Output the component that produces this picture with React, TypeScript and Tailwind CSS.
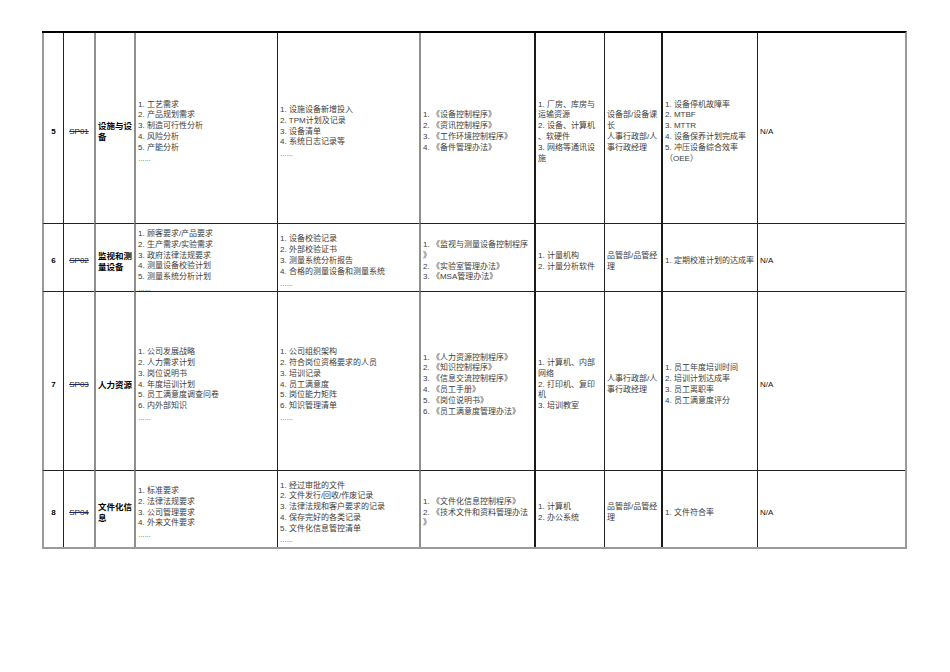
import React from "react";

type Row = {
  no: string;
  code: string;
  name: string[];
  inputs: string[];
  records: string[];
  docs: string[];
  resources: string[];
  owner: string[];
  kpis: string[];
  other: string;
};

const rows: Row[] = [
  {
    no: "5",
    code: "SP01",
    name: ["设施与设", "备"],
    inputs: ["1. 工艺需求", "2. 产品规划需求", "3. 制造可行性分析", "4. 风险分析", "5. 产能分析", "……"],
    records: ["1. 设施设备新增投入", "2. TPM计划及记录", "3. 设备清单", "4. 系统日志记录等", "……"],
    docs: ["1. 《设备控制程序》", "2. 《资讯控制程序》", "3. 《工作环境控制程序》", "4. 《备件管理办法》"],
    resources: ["1. 厂房、库房与", "运输资源", "2. 设备、计算机", "、软硬件", "3. 网络等通讯设", "施"],
    owner: ["设备部/设备课", "长", "人事行政部/人", "事行政经理"],
    kpis: ["1. 设备停机故障率", "2. MTBF", "3. MTTR", "4. 设备保养计划完成率", "5. 冲压设备综合效率", "（OEE）"],
    other: "N/A",
  },
  {
    no: "6",
    code: "SP02",
    name: ["监视和测", "量设备"],
    inputs: ["1. 顾客要求/产品要求", "2. 生产需求/实验需求", "3. 政府法律法规要求", "4. 测量设备校验计划", "5. 测量系统分析计划", "……"],
    records: ["1. 设备校验记录", "2. 外部校验证书", "3. 测量系统分析报告", "4. 合格的测量设备和测量系统", "……"],
    docs: ["1. 《监视与测量设备控制程序", "》", "2. 《实验室管理办法》", "3. 《MSA管理办法》"],
    resources: ["1. 计量机构", "2. 计量分析软件"],
    owner: ["品管部/品管经", "理"],
    kpis: ["1. 定期校准计划的达成率"],
    other: "N/A",
  },
  {
    no: "7",
    code: "SP03",
    name: ["人力资源"],
    inputs: ["1. 公司发展战略", "2. 人力需求计划", "3. 岗位说明书", "4. 年度培训计划", "5. 员工满意度调查问卷", "6. 内外部知识", "……"],
    records: ["1. 公司组织架构", "2. 符合岗位资格要求的人员", "3. 培训记录", "4. 员工满意度", "5. 岗位能力矩阵", "6. 知识管理清单", "……"],
    docs: ["1. 《人力资源控制程序》", "2. 《知识控制程序》", "3. 《信息交流控制程序》", "4. 《员工手册》", "5. 《岗位说明书》", "6. 《员工满意度管理办法》"],
    resources: ["1. 计算机、内部", "网络", "2. 打印机、复印", "机", "3. 培训教室"],
    owner: ["人事行政部/人", "事行政经理"],
    kpis: ["1. 员工年度培训时间", "2. 培训计划达成率", "3. 员工离职率", "4. 员工满意度评分"],
    other: "N/A",
  },
  {
    no: "8",
    code: "SP04",
    name: ["文件化信", "息"],
    inputs: ["1. 标准要求", "2. 法律法规要求", "3. 公司管理要求", "4. 外来文件要求", "……"],
    records: ["1. 经过审批的文件", "2. 文件发行/回收/作废记录", "3. 法律法规和客户要求的记录", "4. 保存完好的各类记录", "5. 文件化信息管控清单", "……"],
    docs: ["1. 《文件化信息控制程序》", "2. 《技术文件和资料管理办法", "》"],
    resources: ["1. 计算机", "2. 办公系统"],
    owner: ["品管部/品管经", "理"],
    kpis: ["1. 文件符合率"],
    other: "N/A",
  },
];

// left edge of each column, as it is drawn in the sheet
const colBorders = [
  "border-l-2 border-l-[#9a9a9a]",
  "border-l border-l-[#222]",
  "border-l-2 border-l-[#8f8f8f]",
  "border-l-2 border-l-[#8f8f8f]",
  "border-l border-l-[#222]",
  "border-l-2 border-l-[#8f8f8f]",
  "border-l-2 border-l-[#1a1a1a]",
  "border-l border-l-[#222]",
  "border-l-2 border-l-[#1a1a1a]",
  "border-l border-l-[#222]",
];

function Lines({ lines, className = "" }: { lines: string[]; className?: string }) {
  return (
    <div className={className}>
      {lines.map((line, i) =>
        line === "……" ? (
          <div className="whitespace-nowrap text-[6.5px] leading-[11px]" key={i}>
            {line}
          </div>
        ) : (
          <div className="whitespace-nowrap" key={i}>
            {line}
          </div>
        ),
      )}
    </div>
  );
}

function Cell({
  col,
  first,
  center,
  children,
}: {
  col: number;
  first: boolean;
  center?: boolean;
  children: React.ReactNode;
}) {
  return (
    <div
      className={`flex items-center overflow-hidden px-[2px] pt-[8px] ${colBorders[col]} ${
        first ? "" : "border-t border-t-[#222]"
      } ${center ? "justify-center" : ""}`}
    >
      {children}
    </div>
  );
}

export default function App() {
  return (
    <div
      className="h-[672px] w-[950px] bg-white pl-[42px] pt-[31px] text-[8px] leading-[10.8px] text-[#3c3c3c]"
      style={{ fontFamily: '"Liberation Sans", "Noto Sans CJK SC", sans-serif' }}
    >
      <div className="grid w-fit grid-cols-[21px_31px_40px_143px_142px_115px_70px_57px_96px_148px] grid-rows-[190px_68px_179px_77px] border-t-2 border-r-2 border-b-2 border-t-black border-r-[#9a9a9a] border-b-[#9a9a9a]">
        {rows.map((row, r) => {
          const first = r === 0;
          return (
            <React.Fragment key={row.no}>
              <Cell col={0} first={first} center>
                <span className="font-bold text-black">{row.no}</span>
              </Cell>
              <Cell col={1} first={first} center>
                <span className="text-[#222] line-through decoration-[#1b2a6b]">{row.code}</span>
              </Cell>
              <Cell col={2} first={first}>
                <Lines className="text-[8.5px] leading-[10.7px] font-bold text-black" lines={row.name} />
              </Cell>
              <Cell col={3} first={first}>
                <Lines lines={row.inputs} />
              </Cell>
              <Cell col={4} first={first}>
                <Lines lines={row.records} />
              </Cell>
              <Cell col={5} first={first}>
                <Lines lines={row.docs} />
              </Cell>
              <Cell col={6} first={first}>
                <Lines lines={row.resources} />
              </Cell>
              <Cell col={7} first={first}>
                <Lines lines={row.owner} />
              </Cell>
              <Cell col={8} first={first}>
                <Lines lines={row.kpis} />
              </Cell>
              <Cell col={9} first={first}>
                <span className="text-[#111]">{row.other}</span>
              </Cell>
            </React.Fragment>
          );
        })}
      </div>
    </div>
  );
}
